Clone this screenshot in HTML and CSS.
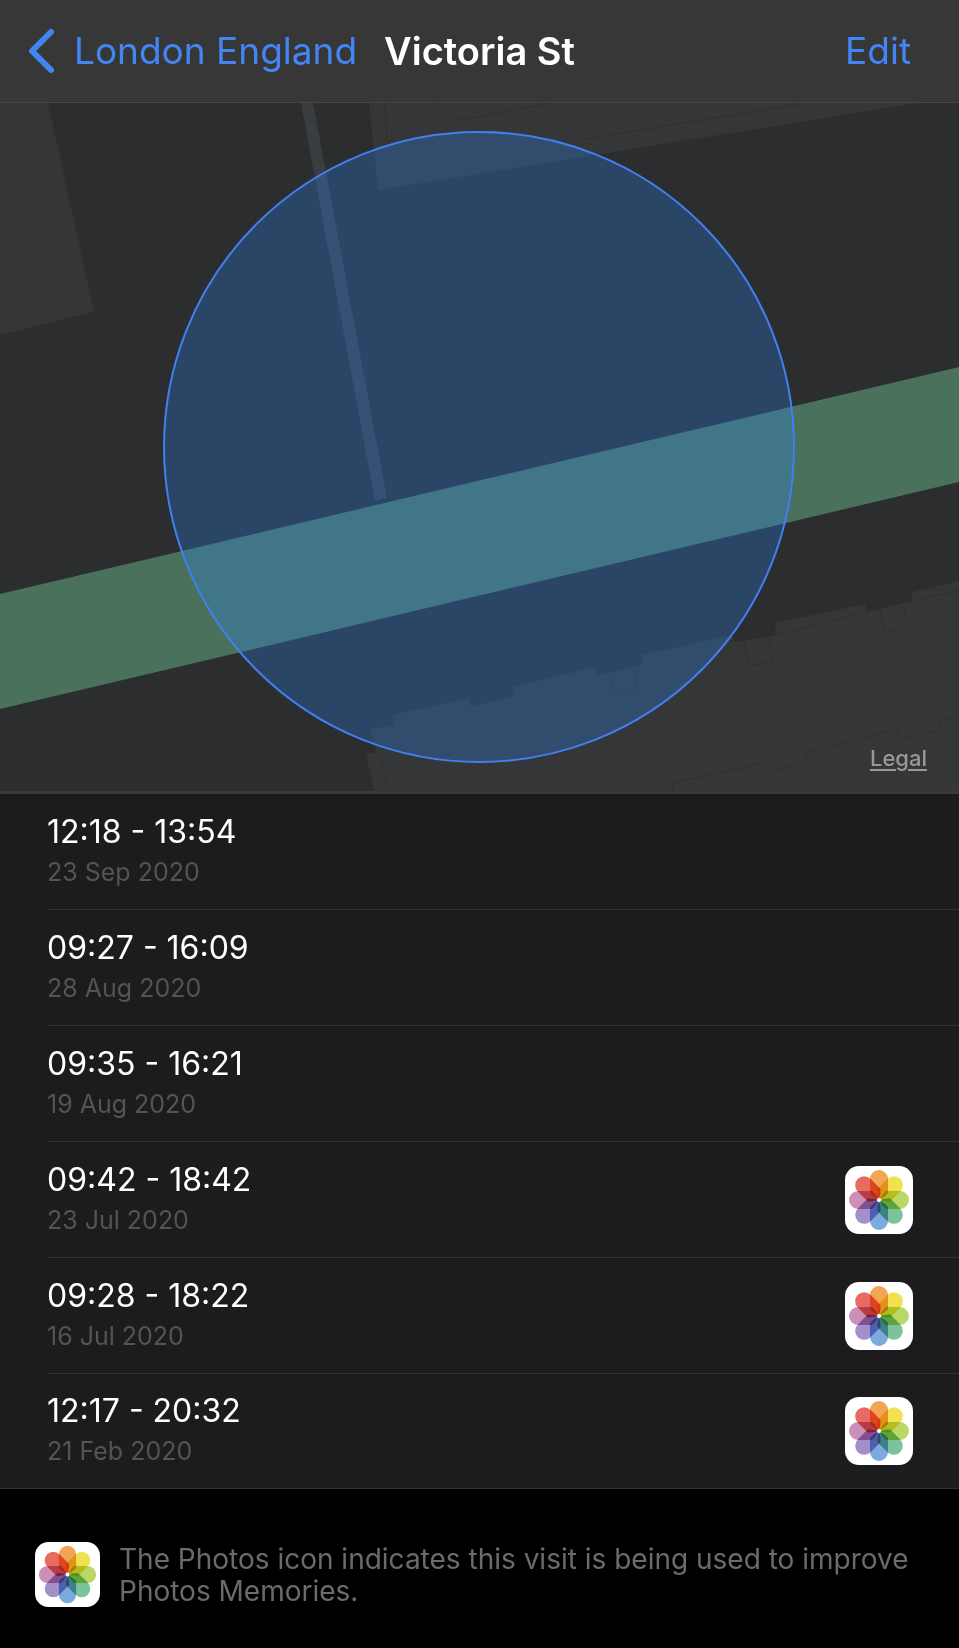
FILE: index.html
```html
<!DOCTYPE html>
<html lang="en">
<head>
    <meta charset="UTF-8">
    <meta name="viewport" content="width=device-width, initial-scale=1.0">
    <title>Victoria St</title>
    <link rel="stylesheet" href="styles.css">
</head>
<body>
    <!-- Photos icon, reused in the list and the footer -->
    <svg class="defs" width="0" height="0" aria-hidden="true">
        <defs>
            <path id="petal" d="M34 33 Q29 32 25 27 V13 a9 9 0 0 1 18 0 V27 Q39 32 34 33 Z"/>
            <symbol id="photos" viewBox="0 0 68 68">
                <rect width="68" height="68" rx="14" fill="#fff"/>
                <g class="petals">
                    <use href="#petal" fill="#f2a555"/>
                    <use href="#petal" fill="#f1e04f" transform="rotate(45 34 34)"/>
                    <use href="#petal" fill="#bbd866" transform="rotate(90 34 34)"/>
                    <use href="#petal" fill="#7cc29b" transform="rotate(135 34 34)"/>
                    <use href="#petal" fill="#7aaade" transform="rotate(180 34 34)"/>
                    <use href="#petal" fill="#a38fc9" transform="rotate(225 34 34)"/>
                    <use href="#petal" fill="#cb8fb8" transform="rotate(270 34 34)"/>
                    <use href="#petal" fill="#e96a60" transform="rotate(315 34 34)"/>
                </g>
                <circle cx="34" cy="34" r="2" fill="#fff"/>
            </symbol>
        </defs>
    </svg>

    <header class="navbar">
        <a class="back" href="#">
            <svg class="chevron" viewBox="0 0 26 46" aria-hidden="true">
                <path d="M23 4 L4 23 L23 42"/>
            </svg>
            London England
        </a>
        <h1>Victoria St</h1>
        <button class="edit" type="button">Edit</button>
    </header>

    <main>
        <section class="map">
            <svg viewBox="0 103 959 688" role="img" aria-label="Map of Victoria St">
                <rect class="land" y="103" width="959" height="688"/>
                <g class="building">
                    <path d="M0 103 H48 L94 312 L0 335 Z"/>
                    <path d="M369 103 L378 190 L602 154 L918 103 Z"/>
                    <path d="M374 791 L366 754 L376 752 L370 729 L393 725 V715 L468 698 L471 707 L513 696 V687 L595 667 L598 675 L642 665 V655 L732 635 L735 642 L776 635 L775 623 L865 604 L866 612 L912 601 V592 L959 581 V791 Z"/>
                </g>
                <g class="outline">
                    <path d="M385 103 L387 140"/>
                    <path d="M434 103 Q448 122 472 118 L550 103"/>
                    <path d="M580 140 L800 104"/>
                    <path d="M381 753 L387 791"/>
                    <path d="M609 675 L615 694 L637 690 L635 667"/>
                    <path d="M744 642 L748 666 L772 662 L769 637"/>
                    <path d="M880 610 L884 633 L908 628 L903 605"/>
                    <path d="M776 635 L866 612 M912 601 L959 590"/>
                    <path d="M672 791 L673 783 L764 763 L767 772 L804 763 L806 753 L897 729 L898 740 L940 730 L942 719 L959 716"/>
                </g>
                <path class="lane" d="M301 103 H313 L387 498 L375 501 Z"/>
                <path class="road" d="M0 594 L959 367 V482 L0 709 Z"/>
                <circle class="region" cx="479" cy="447" r="315"/>
            </svg>
            <a class="legal" href="#">Legal</a>
        </section>

        <ul class="visits">
            <li>
                <div class="visit">
                    <p class="time">12:18 - 13:54</p>
                    <p class="date">23 Sep 2020</p>
                </div>
            </li>
            <li>
                <div class="visit">
                    <p class="time">09:27 - 16:09</p>
                    <p class="date">28 Aug 2020</p>
                </div>
            </li>
            <li>
                <div class="visit">
                    <p class="time">09:35 - 16:21</p>
                    <p class="date">19 Aug 2020</p>
                </div>
            </li>
            <li>
                <div class="visit">
                    <p class="time">09:42 - 18:42</p>
                    <p class="date">23 Jul 2020</p>
                </div>
                <svg class="photos" role="img" aria-label="Photos"><use href="#photos"/></svg>
            </li>
            <li>
                <div class="visit">
                    <p class="time">09:28 - 18:22</p>
                    <p class="date">16 Jul 2020</p>
                </div>
                <svg class="photos" role="img" aria-label="Photos"><use href="#photos"/></svg>
            </li>
            <li>
                <div class="visit">
                    <p class="time">12:17 - 20:32</p>
                    <p class="date">21 Feb 2020</p>
                </div>
                <svg class="photos" role="img" aria-label="Photos"><use href="#photos"/></svg>
            </li>
        </ul>
    </main>

    <footer class="note">
        <svg class="photos" aria-hidden="true"><use href="#photos"/></svg>
        <p>The Photos icon indicates this visit is being used to improve Photos Memories.</p>
    </footer>
</body>
</html>
```
FILE: styles.css
```css
* {
    box-sizing: border-box;
}

body {
    margin: 0;
    background-color: #000;
    color: #fff;
    font-family: Inter, "Liberation Sans", sans-serif;
}

h1, p, ul {
    margin: 0;
    padding: 0;
}

.defs {
    position: absolute;
}

.petals {
    isolation: isolate;
}

.petals use {
    mix-blend-mode: multiply;
}

/* Navigation bar */
.navbar {
    display: grid;
    grid-template-columns: 1fr auto 1fr;
    align-items: center;
    height: 103px;
    padding: 0 28px;
    background-color: #373738;
    border-bottom: 1px solid #464748;
    font-size: 37px;
    line-height: 48px;
    white-space: nowrap;
}

.back {
    display: flex;
    align-items: center;
    gap: 20px;
    color: #4285f4;
    text-decoration: none;
}

.chevron {
    width: 26px;
    height: 46px;
    fill: none;
    stroke: #4285f4;
    stroke-width: 6;
    stroke-linecap: round;
    stroke-linejoin: round;
}

.navbar h1 {
    font-size: 38px;
    font-weight: 600;
}

.edit {
    justify-self: end;
    padding: 0 20px;
    background: none;
    border: none;
    color: #4285f4;
    font: inherit;
    cursor: pointer;
}

/* Map */
.map {
    position: relative;
    border-bottom: 3px solid #39393a;
}

.map svg {
    display: block;
    width: 100%;
    height: auto;
}

.land {
    fill: #2c2d2e;
}

.building {
    fill: #353637;
}

.outline {
    fill: none;
    stroke: #303032;
    stroke-width: 1;
}

.lane {
    fill: #393d3f;
}

.road {
    fill: #4a715c;
}

.region {
    fill: rgba(42, 134, 250, 0.28);
    stroke: #4080f0;
    stroke-width: 2;
}

.legal {
    position: absolute;
    right: 32px;
    bottom: 20px;
    color: #98989a;
    font-size: 22px;
    font-weight: 500;
    line-height: 26px;
    text-decoration-thickness: 2px;
    text-underline-offset: 3px;
}

/* Visits */
.visits {
    list-style: none;
    background-color: #1c1c1e;
    border-bottom: 1px solid #303032;
}

.visits li {
    display: flex;
    align-items: center;
    justify-content: space-between;
    height: 116px;
    margin-left: 47px;
    padding-right: 46px;
    border-bottom: 1px solid #303032;
}

.visits li:last-child {
    height: 114px;
    border-bottom: none;
}

.time {
    font-size: 32px;
    line-height: 40px;
}

.date {
    color: #545457;
    font-size: 25px;
    line-height: 40px;
}

.photos {
    flex: none;
    width: 68px;
    height: 68px;
}

/* Footer note */
.note {
    display: flex;
    align-items: center;
    gap: 19px;
    padding: 53px 35px 40px;
    color: #6b6b6e;
    font-size: 28px;
    line-height: 32px;
}

.note .photos {
    width: 65px;
    height: 65px;
}
```
